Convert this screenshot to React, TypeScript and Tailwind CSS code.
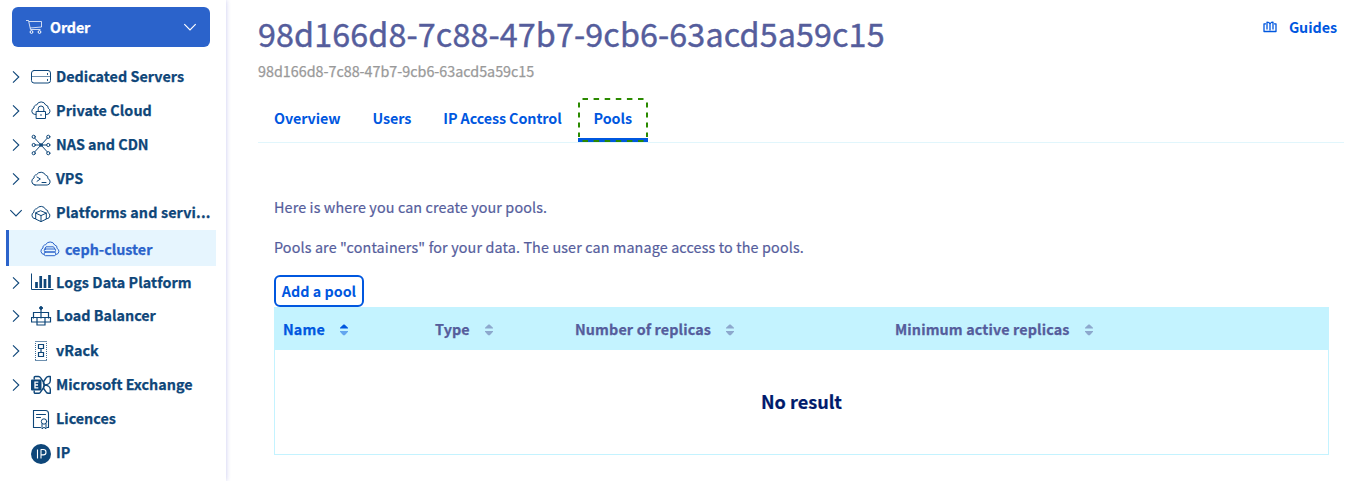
import type { ReactNode } from "react";

const Icon = ({ children, className = "" }: { children: ReactNode; className?: string }) => (
  <svg
    viewBox="0 0 24 22"
    fill="none"
    stroke="currentColor"
    strokeWidth="1"
    strokeLinecap="round"
    strokeLinejoin="round"
    className={`h-[22px] w-6 shrink-0 ${className}`}
  >
    {children}
  </svg>
);

const ServerIcon = () => (
  <Icon>
    <rect x=".5" y="4.5" width="19" height="12.5" rx="2.5" />
    <path d="M.5 10.500h19" opacity=".6" />
    <path d="M16.5 7.500v1M16.500 13.500v1" />
  </Icon>
);

const PrivateCloudIcon = () => (
  <Icon>
    <path d="M4.8 14.400H3.900a3.300 3.300 0 0 1-.9-6.400 2.500 2.500 0 0 1 2.600-3A4.900 4.900 0 0 1 14.700 5a3 3 0 0 1 2.500 3.200 3.300 3.300 0 0 1-1.100 6.200h-.9" />
    <rect x="5.500" y="11.500" width="9" height="7" />
    <path d="M7.200 11.500V8.800a2.800 2.800 0 0 1 5.600 0v2.700M10 14.500v1" />
  </Icon>
);

const NetworkIcon = () => (
  <Icon>
    <path d="M3.700 4.100 10 11l6.300-6.900M3.700 17.900 10 11l6.300 6.900M4.500 11h11" />
    <circle cx="2.700" cy="2.800" r="1.600" />
    <circle cx="17.300" cy="2.800" r="1.600" />
    <circle cx="2.700" cy="11" r="1.600" />
    <circle cx="17.300" cy="11" r="1.600" />
    <circle cx="2.700" cy="19.200" r="1.600" />
    <circle cx="17.300" cy="19.200" r="1.600" />
    <circle cx="10" cy="11" r="1.300" fill="currentColor" />
  </Icon>
);

const VpsIcon = () => (
  <Icon>
    <path d="M4 17h12.200a3.300 3.300 0 0 0 .7-6.400 2.800 2.800 0 0 0-2.300-3.400 5.100 5.100 0 0 0-9-.5 2.600 2.600 0 0 0-2.500 3.200A3.700 3.700 0 0 0 4 17Z" />
    <path d="m6 9 3.400 2L6 13.300M11 14.500h4" />
  </Icon>
);

const PlatformIcon = () => (
  <Icon>
    <path d="M4.600 16.700H4A3.400 3.400 0 0 1 3 10.200a2.600 2.600 0 0 1 2.600-3.300 5.100 5.100 0 0 1 9.100.6A2.800 2.800 0 0 1 17 10.600a3.200 3.200 0 0 1-.9 6.100h-.8" />
    <path d="m10 8.900 5.300 2.200v6L10 19.600l-5.300-2.500v-6ZM4.700 11.100l5.300 2.500 5.300-2.500M10 13.600v6" />
  </Icon>
);

const ClusterIcon = () => (
  <Icon>
    <path d="M4 17.500A3.400 3.400 0 0 1 3 11a2.600 2.600 0 0 1 2.600-3.200A5 5 0 0 1 14.700 8 2.900 2.900 0 0 1 17 11.400a3.200 3.200 0 0 1-.9 6.100" />
    <path d="M4.500 12.300 6 9.800h7.500l1.700 2.500" />
    <rect x="4.300" y="12" width="11.200" height="3" rx="1.200" />
    <rect x="4.300" y="15" width="11.200" height="3.700" rx="1.200" />
  </Icon>
);

const LogsIcon = () => (
  <Icon>
    <path d="M.5 1.500v16h22" strokeLinecap="butt" />
    <path d="M5.500 10v6M9.700 4v12M14 7v9M18.500 3v13" strokeWidth="2.700" strokeLinecap="butt" />
  </Icon>
);

const BalancerIcon = () => (
  <Icon>
    <circle cx="10" cy="3" r="1.400" fill="currentColor" />
    <path d="M10 4v9M2.500 13V7.500h15V13" strokeWidth="1.200" strokeLinejoin="miter" />
    <path d="M.5 12.500h19v4.500H.5ZM6 12.500v7.500h8v-7.500" strokeWidth="1.200" strokeLinejoin="miter" />
  </Icon>
);

const RackIcon = () => (
  <Icon>
    <path d="M4 1.500h12M4 20.500h12" opacity=".6" strokeLinecap="butt" />
    <path d="M4.500 3v17M15.500 3v17" strokeDasharray="1 1" opacity=".8" strokeLinecap="butt" />
    <path d="M7.500 4.500h5v4h-5zM7.500 12.500h5v4h-5zM10 8.500v4" strokeWidth="1.200" strokeLinejoin="miter" />
  </Icon>
);

const ExchangeIcon = () => (
  <Icon>
    <path
      d="M3.200 5V3.500a1 1 0 0 1 1-1h3.300c1 0 1.500.4 2 1.200L13 9c.8 1.300.8 2.700 0 4l-3.500 5.100c-.5.800-1 1.200-2 1.200H4.200a1 1 0 0 1-1-1V17M19.300 2.500v4.200c0 2.500-2.600 4.300-6.300 4.300-1-2-.9-2.700 0-4l2-3c.6-1 1.300-1.500 2.500-1.500ZM19.300 19.300v-4c0-2.500-2.600-4.300-6.300-4.300-1 2-.9 2.700 0 4l2 2.800c.6 1 1.300 1.500 2.500 1.500Z"
      strokeWidth="1.400"
    />
    <path d="M0 6.500a1 1 0 0 1 1-1h8.500a1 1 0 0 1 1 1v9a1 1 0 0 1-1 1H1a1 1 0 0 1-1-1Z" fill="currentColor" stroke="none" />
    <path d="M7.300 8.200H4v5.600h3.300M4 11h3" stroke="white" strokeWidth="1.300" strokeLinecap="butt" strokeLinejoin="miter" />
  </Icon>
);

const LicenceIcon = () => (
  <Icon>
    <path d="M9.500 19.500h-7v-17h12a3 3 0 0 1 3 3v14H16" strokeLinejoin="miter" strokeWidth="1.100" />
    <path d="M5.500 6.500h9M5.500 9.500h4" />
    <circle cx="13" cy="13.500" r="2.700" />
    <path d="M11 15.800v5l2-1.500 2 1.500v-5" />
  </Icon>
);

const IpIcon = () => (
  <Icon>
    <circle cx="10" cy="12" r="10" fill="currentColor" stroke="none" />
    <path d="M6.500 7.500v9M10 16.500v-9h2.300a2.700 2.700 0 0 1 0 5.400H10" stroke="white" strokeWidth="1.100" strokeLinecap="butt" />
  </Icon>
);

const Chevron = ({ open }: { open?: boolean }) => (
  <svg viewBox="0 0 14 14" fill="none" stroke="currentColor" strokeWidth="1.100" className="mt-0.5 mr-2 h-3.5 w-3.5 shrink-0">
    <path d={open ? "M1.300 4.200 7 10l5.700-5.800" : "m4 1.300 5.800 5.700L4 12.700"} />
  </svg>
);

type Item = { label: string; icon: ReactNode; box: string; open?: boolean; leaf?: boolean };

const topItems: Item[] = [
  { label: "Dedicated Servers", icon: <ServerIcon />, box: "h-[34px] tracking-[0.02px]" },
  { label: "Private Cloud", icon: <PrivateCloudIcon />, box: "h-[34px] tracking-[0.08px]" },
  { label: "NAS and CDN", icon: <NetworkIcon />, box: "h-[34px]" },
  { label: "VPS", icon: <VpsIcon />, box: "h-[34px]" },
  { label: "Platforms and servi...", icon: <PlatformIcon />, box: "h-[34px] tracking-[0.14px]", open: true },
];

const bottomItems: Item[] = [
  { label: "Logs Data Platform", icon: <LogsIcon />, box: "h-8 tracking-[0.08px]" },
  { label: "Load Balancer", icon: <BalancerIcon />, box: "h-[34px]" },
  { label: "vRack", icon: <RackIcon />, box: "mt-px h-[34px]" },
  { label: "Microsoft Exchange", icon: <ExchangeIcon />, box: "h-[34px]" },
  { label: "Licences", icon: <LicenceIcon />, box: "h-[34px]", leaf: true },
  { label: "IP", icon: <IpIcon />, box: "h-[34px]", leaf: true },
];

const NavRow = ({ item }: { item: Item }) => (
  <li className={`flex items-center pl-[9px] ${item.box}`}>
    {item.leaf ? <span className="w-[22px] shrink-0" /> : <Chevron open={item.open} />}
    <span className="w-[25px] shrink-0 pt-px">{item.icon}</span>
    <span className="leading-5 whitespace-nowrap">{item.label}</span>
  </li>
);

const Sort = ({ active }: { active?: boolean }) => (
  <svg viewBox="0 0 8 12" className="mt-px h-3 w-2" fill="currentColor">
    <path d="M3.500.5h1L8 3.800v.7H0v-.7Z" opacity={active ? 1 : 0.5} />
    <path d="M0 7h8v.8L4.800 11.200H3.200L0 7.800Z" opacity={0.5} />
  </svg>
);

const columns = [
  { label: "Name", width: "w-[152px]", active: true },
  { label: "Type", width: "w-[140px]" },
  { label: "Number of replicas", width: "w-[320px]" },
  { label: "Minimum active replicas", width: "flex-1" },
];

const tabs = ["Overview", "Users", "IP Access Control"];

export default function App() {
  return (
    <div className="flex h-[481px] w-[1361px] overflow-hidden bg-white font-['Noto_Sans_CJK_SC',sans-serif] text-[14.33px] text-[#555d9c]">
      <aside className="h-full w-[226px] shrink-0 pt-[7px] font-bold text-[#0e4679] shadow-[0_0_5px_rgba(0,0,180,0.22)] [-webkit-text-stroke:0.25px]">
        <button className="ml-3 flex h-10 w-[198px] items-center rounded-md bg-[#2b63cb] pr-[13px] pl-3.5 text-white">
          <svg viewBox="0 0 18 16" fill="none" stroke="currentColor" className="h-4 w-[18px]">
            <path d="M0 1.500h2.500L4.500 10.500h10M3 2.500h12.500v5.500L4 9" strokeWidth=".9" opacity=".85" />
            <circle cx="5.500" cy="13" r="1.400" />
            <circle cx="13.500" cy="13" r="1.400" />
          </svg>
          <span className="ml-1.5 flex-1 text-left leading-5 tracking-[-0.15px]">Order</span>
          <svg viewBox="0 0 14 14" fill="none" stroke="currentColor" strokeWidth="1.200" className="h-3.5 w-3.5">
            <path d="m1.300 4.200 5.700 5.800 5.700-5.800" />
          </svg>
        </button>
        <ul className="mt-3">
          {topItems.map((item) => <NavRow key={item.label} item={item} />)}
          <li className="mt-px mr-2.5 ml-1.5 flex h-9 items-center border-l-3 border-[#2b63cb] bg-[#e6f5fe] pl-[31px] text-[#2b63cb]">
            <ClusterIcon />
            <span className="ml-px pt-0.5 leading-5">ceph-cluster</span>
          </li>
          {bottomItems.map((item) => <NavRow key={item.label} item={item} />)}
        </ul>
      </aside>

      <main className="flex-1 pt-[13px] pr-[17px] pl-8">
        <header className="flex justify-between">
          <div>
            <h1 className="text-[32.3px] leading-10 tracking-[0.11px] [-webkit-text-stroke:0.4px]">98d166d8-7c88-47b7-9cb6-63acd5a59c15</h1>
            <p className="mt-2 leading-5 text-[#999] [-webkit-text-stroke:0.25px]">98d166d8-7c88-47b7-9cb6-63acd5a59c15</p>
          </div>
          <a className="mt-1 mr-[7px] flex h-5 items-center font-bold text-[#0057df]">
            <svg viewBox="0 0 14 12" fill="none" stroke="currentColor" strokeWidth="1.300" strokeLinejoin="round" className="mr-3 h-3 w-3.5">
              <path d="M3 2.800H1v7.700h12V2.800h-2" />
              <path d="M4 8.500V1.200C5.300 1.200 6.500 1.800 7 3c.5-1.200 1.700-1.800 3-1.800v7.300M7 3v6.500" />
            </svg>
            <span className="tracking-[-0.05px]">Guides</span>
          </a>
        </header>

        <nav className="mt-[17px] flex h-[45px] items-start border-b border-[#e1f6fc] font-bold tracking-[-0.09px] text-[#0057df]">
          {tabs.map((tab) => (
            <a key={tab} className="flex h-10 items-center px-4 leading-5">{tab}</a>
          ))}
          <a className="relative flex h-11 w-[70px] items-center border-b-4 border-[#0057df] px-4 leading-5">
            Pools
            <svg viewBox="0 0 70 44" fill="none" stroke="#2b8a00" strokeWidth="2" className="absolute top-0 left-0 h-11 w-[70px]">
              <path d="M4.500 1H67M4.500 43H67" strokeDasharray="5.500 5.600" />
              <path d="M1 4.500V39M69 4.500V39" strokeDasharray="5 5" />
            </svg>
          </a>
        </nav>

        <section className="mt-[54px] pr-[15px] pl-4">
          <p className="leading-5 tracking-[0.135px] [-webkit-text-stroke:0.2px]">Here is where you can create your pools.</p>
          <p className="mt-5 leading-5 tracking-[0.145px] [-webkit-text-stroke:0.2px]">Pools are "containers" for your data. The user can manage access to the pools.</p>
          <button className="mt-[18px] flex h-8 w-[90px] items-center justify-center rounded-md border-2 border-[#0057df] font-bold whitespace-nowrap text-[#0057df]">
            Add a pool
          </button>
          <div className="h-[148px] w-[1055px] border border-[#c4f3ff]">
            <div className="flex h-[42px] items-center bg-[#c4f3ff] pl-2 font-bold tracking-[0.13px] [-webkit-text-stroke:0.25px]">
              {columns.map((c) => (
                <div key={c.label} className={`flex items-center gap-[15px] ${c.width} ${c.active ? "text-[#0057df]" : ""}`}>
                  <span className="leading-5">{c.label}</span>
                  <Sort active={c.active} />
                </div>
              ))}
            </div>
            <div className="flex h-[102px] items-center justify-center text-[18.1px] leading-[26px] font-bold text-[#001a6b] [-webkit-text-stroke:0.2px]">No result</div>
          </div>
        </section>
      </main>
    </div>
  );
}
